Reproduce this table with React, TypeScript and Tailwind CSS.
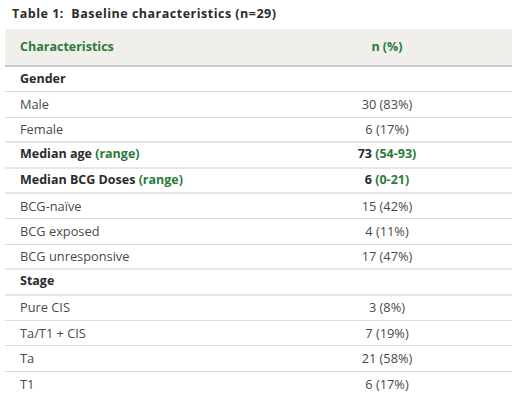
import React from "react";

type Row = {
  label: React.ReactNode;
  value: React.ReactNode;
  bold?: boolean;
  thick?: boolean;
};

const G = ({ children }: { children: React.ReactNode }) => (
  <span className="text-[#2b7a3b]">{children}</span>
);

const rows: Row[] = [
  { label: "Gender", value: "", bold: true },
  { label: "Male", value: "30 (83%)" },
  { label: "Female", value: "6 (17%)", thick: true },
  { label: <>Median age <G>(range)</G></>, value: <>73 <G>(54-93)</G></>, bold: true, thick: true },
  { label: <>Median BCG Doses <G>(range)</G></>, value: <>6 <G>(0-21)</G></>, bold: true, thick: true },
  { label: "BCG-naïve", value: "15 (42%)" },
  { label: "BCG exposed", value: "4 (11%)" },
  { label: "BCG unresponsive", value: "17 (47%)", thick: true },
  { label: "Stage", value: "", bold: true, thick: true },
  { label: "Pure CIS", value: "3 (8%)" },
  { label: "Ta/T1 + CIS", value: "7 (19%)" },
  { label: "Ta", value: "21 (58%)" },
  { label: "T1", value: "6 (17%)" },
];

export default function App() {
  return (
    <div
      className="w-[523px] h-[399px] bg-white overflow-hidden"
      style={{ fontFamily: '"Open Sans", "Liberation Sans", sans-serif' }}
    >
      <div className="h-[29px] pl-[12px] flex items-center text-[12.5px] font-bold text-[#2b2b2b] tracking-[0.5px]">
        <span>Table 1:&nbsp; Baseline characteristics (n=29)</span>
      </div>
      <div className="ml-[5px] w-[507px]">
        <div className="h-[38px] flex bg-[#f1efec] border-b-2 border-[#cacaca] text-[12.5px] font-bold text-[#2b7a3b]">
          <div className="w-[257px] pl-[15px] flex items-center">
            <span>Characteristics</span>
          </div>
          <div className="flex-1 flex items-center justify-center">
            <span>n (%)</span>
          </div>
        </div>
        {rows.map((r, i) => (
          <div
            key={i}
            className={`h-[25.4px] flex ${
              r.thick ? "border-b-2 border-[#e6e6e6]" : i === rows.length - 1 ? "" : "border-b border-[#dcdcdc]"
            } ${r.bold ? "text-[12.5px] font-bold text-[#2b2b2b]" : "text-[12.8px] text-[#4a4a4a]"}`}
          >
            <div className="w-[257px] pl-[15px] flex items-center">
              <span>{r.label}</span>
            </div>
            <div className="flex-1 flex items-center justify-center">
              <span>{r.value}</span>
            </div>
          </div>
        ))}
      </div>
    </div>
  );
}
